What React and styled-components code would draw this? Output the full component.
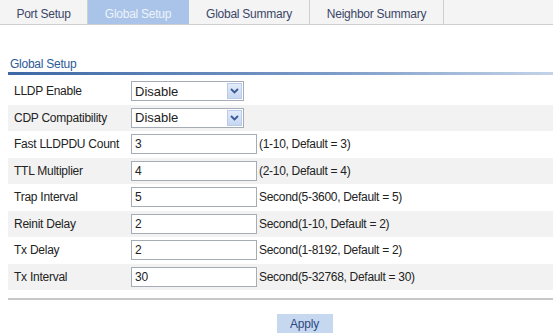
import React from 'react';
import styled, { createGlobalStyle } from 'styled-components';

const GlobalStyle = createGlobalStyle`
  body {
    margin: 0;
    background: #fff;
    font-family: "Liberation Sans", Arial, sans-serif;
    font-size: 12px;
    letter-spacing: -0.25px;
    color: #222;
  }
`;

const Page = styled.div`
  width: 553px;
  height: 333px;
  overflow: hidden;
`;

const TabBar = styled.div`
  display: flex;
  height: 24px;
  background: #f4f4f4;
  border-bottom: 1px solid #cfcfcf;
`;

const Tab = styled.div`
  width: ${p => p.w}px;
  display: flex;
  align-items: center;
  justify-content: center;
  padding-top: 3px;
  box-sizing: border-box;
  border-right: 1px solid ${p => (p.active ? '#a9c4e8' : '#d0d0d0')};
  background: ${p => (p.active ? '#a9c4e8' : 'transparent')};
  color: ${p => (p.active ? '#eef3fb' : '#3b4668')};
  font-size: 12px;
`;

const Content = styled.div`
  padding: 31px 0 0 8px;
`;

const SectionTitle = styled.div`
  padding: 1px 0 1px 2px;
  color: #2c5a98;
  font-size: 12px;
  line-height: 14px;
  border-bottom: 3px solid transparent;
  border-image: linear-gradient(to right, #3d68a6, #7d9cc8 60%, #c4d3e8) 1;
`;

const Rows = styled.div`
  padding-top: 3px;
`;

const Row = styled.div`
  display: flex;
  align-items: center;
  height: 26.5px;
  background: ${p => (p.shaded ? '#f2f2f2' : '#fff')};
`;

const Label = styled.div`
  width: 117px;
  padding-left: 6px;
  color: #222;
`;

const SelectBox = styled.div`
  width: 108px;
  height: 18px;
  border: 1px solid #a5acb5;
  background: #fff;
  display: flex;
  align-items: center;
  justify-content: space-between;
  font-size: 13px;
  letter-spacing: 0;
  padding-left: 3px;
`;

const Arrow = styled.div`
  width: 15px;
  height: 16px;
  margin-right: 1px;
  background: linear-gradient(#e3ecfa, #c5d6f2);
  border: 1px solid #b9cbe6;
  box-sizing: border-box;
  display: flex;
  align-items: center;
  justify-content: center;
`;

const TextInput = styled.div`
  width: 121px;
  height: 18px;
  border: 1px solid #a5acb5;
  background: #fff;
  display: flex;
  align-items: center;
  padding-left: 3px;
  font-size: 12px;
`;

const Hint = styled.div`
  padding-left: 2px;
  color: #222;
  font-size: 12px;
  letter-spacing: -0.3px;
`;

const Footer = styled.div`
  margin-top: 8px;
  border-top: 2px solid #c8c8c8;
  display: flex;
  justify-content: center;
  padding: 14px 0 0 48px;
`;

const Button = styled.div`
  width: 56px;
  height: 19px;
  background: #c6d7f0;
  color: #2c4a80;
  display: flex;
  align-items: center;
  justify-content: center;
  font-size: 12px;
`;

const Chevron = () => (
  <svg width="9" height="6" viewBox="0 0 9 6">
    <path d="M1 1 L4.5 4.5 L8 1" fill="none" stroke="#3a5a94" strokeWidth="1.8" />
  </svg>
);

const tabs = [
  { name: 'Port Setup', w: 88 },
  { name: 'Global Setup', w: 101, active: true },
  { name: 'Global Summary', w: 121 },
  { name: 'Neighbor Summary', w: 134 },
];

const fields = [
  { label: 'LLDP Enable', select: 'Disable' },
  { label: 'CDP Compatibility', select: 'Disable' },
  { label: 'Fast LLDPDU Count', value: '3', hint: '(1-10, Default = 3)' },
  { label: 'TTL Multiplier', value: '4', hint: '(2-10, Default = 4)' },
  { label: 'Trap Interval', value: '5', hint: 'Second(5-3600, Default = 5)' },
  { label: 'Reinit Delay', value: '2', hint: 'Second(1-10, Default = 2)' },
  { label: 'Tx Delay', value: '2', hint: 'Second(1-8192, Default = 2)' },
  { label: 'Tx Interval', value: '30', hint: 'Second(5-32768, Default = 30)' },
];

export default function App() {
  return (
    <Page>
      <GlobalStyle />
      <TabBar>
        {tabs.map(t => (
          <Tab key={t.name} w={t.w} active={t.active}>{t.name}</Tab>
        ))}
      </TabBar>
      <Content>
        <SectionTitle>Global Setup</SectionTitle>
        <Rows>
          {fields.map((f, i) => (
            <Row key={f.label} shaded={i % 2 === 1}>
              <Label>{f.label}</Label>
              {f.select ? (
                <SelectBox>
                  {f.select}
                  <Arrow><Chevron /></Arrow>
                </SelectBox>
              ) : (
                <>
                  <TextInput>{f.value}</TextInput>
                  <Hint>{f.hint}</Hint>
                </>
              )}
            </Row>
          ))}
        </Rows>
        <Footer>
          <Button>Apply</Button>
        </Footer>
      </Content>
    </Page>
  );
}
